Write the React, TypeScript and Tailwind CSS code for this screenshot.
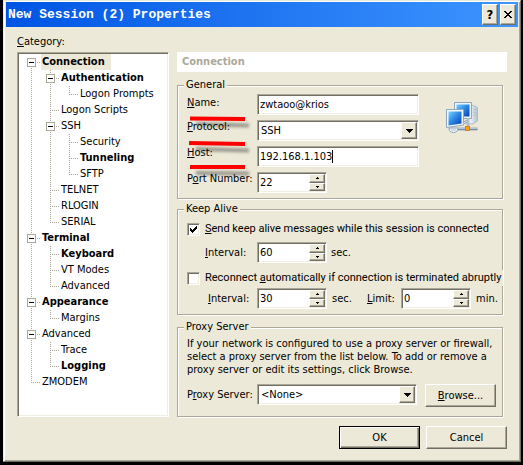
import type { ReactNode } from "react";

const SUNKEN =
  "border border-t-[#aca899] border-l-[#aca899] border-r-white border-b-white bg-white shadow-[inset_1px_1px_0_#716f64,inset_-1px_-1px_0_#f1efe2]";
const RAISED =
  "border border-t-white border-l-white border-r-[#716f64] border-b-[#716f64] bg-[#ece9d8] shadow-[inset_-1px_-1px_0_#aca899]";

type Cell = "line" | "tee" | "elbow" | "box" | "boxFirst";

function Connector({ kind }: { kind: Cell }) {
  const isBox = kind === "box" || kind === "boxFirst";
  return (
    <svg width="19" height="16" viewBox="0 0 19 16" className="shrink-0" shapeRendering="crispEdges" aria-hidden="true">
      <g stroke="#aca899" strokeDasharray="1 1" fill="none">
        {(kind === "line" || kind === "tee" || kind === "box") && <path d="M9.5 0V16" />}
        {kind === "elbow" && <path d="M9.5 0V9" />}
        {kind === "boxFirst" && <path d="M9.5 8V16" />}
        {kind !== "line" && <path d="M9 8.5H18" />}
      </g>
      {isBox && (
        <>
          <rect x="5.5" y="4.5" width="8" height="8" fill="#fff" stroke="#aca899" />
          <path d="M7 8.5H12" stroke="#000" />
        </>
      )}
    </svg>
  );
}

const TREE: { label: string; cells: Cell[]; bold?: boolean; selected?: boolean }[] = [
  { label: "Connection", cells: ["boxFirst"], bold: true, selected: true },
  { label: "Authentication", cells: ["line", "box"], bold: true },
  { label: "Logon Prompts", cells: ["line", "line", "elbow"] },
  { label: "Logon Scripts", cells: ["line", "tee"] },
  { label: "SSH", cells: ["line", "box"] },
  { label: "Security", cells: ["line", "line", "tee"] },
  { label: "Tunneling", cells: ["line", "line", "tee"], bold: true },
  { label: "SFTP", cells: ["line", "line", "elbow"] },
  { label: "TELNET", cells: ["line", "tee"] },
  { label: "RLOGIN", cells: ["line", "tee"] },
  { label: "SERIAL", cells: ["line", "elbow"] },
  { label: "Terminal", cells: ["box"], bold: true },
  { label: "Keyboard", cells: ["line", "tee"], bold: true },
  { label: "VT Modes", cells: ["line", "tee"] },
  { label: "Advanced", cells: ["line", "elbow"] },
  { label: "Appearance", cells: ["box"], bold: true },
  { label: "Margins", cells: ["line", "elbow"] },
  { label: "Advanced", cells: ["box"] },
  { label: "Trace", cells: ["line", "tee"] },
  { label: "Logging", cells: ["line", "elbow"], bold: true },
  { label: "ZMODEM", cells: ["elbow"] },
];

function Group({ title, className, children }: { title: string; className: string; children: ReactNode }) {
  return (
    <fieldset
      className={`relative mr-1 min-w-0 border border-[#aca899] pl-[9px] shadow-[1px_1px_0_#fff,inset_1px_1px_0_#fff] ${className}`}
    >
      <legend className="-ml-[3px] h-[14px] bg-[#ece9d8] px-[2px] leading-[14px]">{title}</legend>
      {children}
    </fieldset>
  );
}

function Combo({ id, value, options, className }: { id: string; value: string; options: string[]; className: string }) {
  return (
    <div className={`relative h-[21px] ${SUNKEN} ${className}`}>
      <select id={id} defaultValue={value} className="block h-full w-full appearance-none bg-transparent pr-5 pl-[3px] outline-none">
        {options.map((o) => (
          <option key={o}>{o}</option>
        ))}
      </select>
      <span className={`pointer-events-none absolute top-px right-px bottom-px flex w-4 items-center justify-center ${RAISED}`}>
        <svg width="7" height="4" viewBox="0 0 7 4" shapeRendering="crispEdges" aria-hidden="true">
          <path d="M0 0H7V1H6V2H5V3H4V4H3V3H2V2H1V1H0Z" />
        </svg>
      </span>
    </div>
  );
}

function Spinner({ id, value }: { id: string; value: string }) {
  return (
    <div className={`flex h-[21px] w-[70px] shrink-0 p-px ${SUNKEN}`}>
      <input id={id} type="text" inputMode="numeric" defaultValue={value} className="min-w-0 flex-1 bg-transparent pl-px outline-none" />
      <div className="flex w-4 flex-col">
        <button type="button" aria-label="Increase" className={`flex flex-1 items-center justify-center ${RAISED}`}>
          <svg width="3" height="2" viewBox="0 0 3 2" shapeRendering="crispEdges">
            <path d="M1 0H2V1H3V2H0V1H1Z" />
          </svg>
        </button>
        <button type="button" aria-label="Decrease" className={`flex flex-1 items-center justify-center ${RAISED}`}>
          <svg width="3" height="2" viewBox="0 0 3 2" shapeRendering="crispEdges">
            <path d="M0 0H3V1H2V2H1V1H0Z" />
          </svg>
        </button>
      </div>
    </div>
  );
}

function Check({ id, checked }: { id: string; checked?: boolean }) {
  return (
    <span className="grid h-[13px] w-[13px] shrink-0">
      <input
        id={id}
        type="checkbox"
        defaultChecked={checked}
        className={`peer col-start-1 row-start-1 h-[13px] w-[13px] appearance-none ${SUNKEN}`}
      />
      <svg
        width="13"
        height="13"
        viewBox="0 0 13 13"
        shapeRendering="crispEdges"
        className="pointer-events-none invisible col-start-1 row-start-1 peer-checked:visible"
        aria-hidden="true"
      >
        <path d="M3 5H4V6H5V7H6V6H7V5H8V4H9V3H10V6H9V7H8V8H7V9H6V10H5V9H4V8H3Z" />
      </svg>
    </span>
  );
}

function NetworkIcon() {
  return (
    <svg width="34" height="34" viewBox="0 0 34 34" className="absolute top-[9px] right-[23px]" aria-hidden="true">
      <defs>
        <linearGradient id="screen" x1="0" y1="0" x2="1" y2="1">
          <stop offset="0" stopColor="#7fd0fb" />
          <stop offset="0.45" stopColor="#2d8ce8" />
          <stop offset="1" stopColor="#0a3fb4" />
        </linearGradient>
        <linearGradient id="tower" x1="0" y1="0" x2="1" y2="0">
          <stop offset="0" stopColor="#ffffff" />
          <stop offset="1" stopColor="#b4c3d2" />
        </linearGradient>
      </defs>
      <path d="M26 4L31 5.500Q32.500 6 32.500 8V20L28 23H23V5Z" fill="url(#tower)" stroke="#a3b4c6" strokeWidth="0.8" />
      <path d="M28 8L31.500 9M28 11L31.500 12M28 14L31.500 14.500" stroke="#a9bacb" strokeWidth="0.8" />
      <path d="M9.500 1.500H26.500V17.500H9.500Z" fill="#eef4f9" stroke="#8fa6bd" />
      <path d="M11.500 3.500H24.500V15.500H11.500Z" fill="url(#screen)" />
      <path d="M4 27Q4 31.500 8.500 31.500T13 27Z" fill="#eef3f7" stroke="#8fa6bd" />
      <path d="M6 29H11" stroke="#b7c5d2" />
      <path d="M1.500 8.500H18.500V24L1.500 26.500Z" fill="#f4f8fb" stroke="#8fa6bd" />
      <path d="M3.500 10.500H16.500V22.500L3.500 24.500Z" fill="url(#screen)" />
      <path d="M18 22.500L22 20M23 17V27" stroke="#8296ab" strokeWidth="2.500" />
      <path d="M18 22.500L22 20M23 17V27" stroke="#dce7f0" />
      <path d="M13 28H32.500" stroke="#71869d" strokeWidth="2.600" />
      <path d="M13 27.600H32.500" stroke="#b9cbdc" strokeWidth="1" />
      <rect x="20.500" y="25.500" width="4" height="4" fill="#ffa010" stroke="#d87400" strokeWidth="0.800" />
    </svg>
  );
}

function RedMarks() {
  return (
    <svg width="70" height="70" viewBox="0 0 70 70" className="pointer-events-none absolute top-[22px] left-[7px]" aria-hidden="true">
      <defs>
        <filter id="soft" x="-20%" y="-100%" width="140%" height="300%">
          <feGaussianBlur stdDeviation="1.5" />
        </filter>
      </defs>
      <g stroke="#000" strokeOpacity="0.35" strokeWidth="4" filter="url(#soft)">
        <path d="M11 10L64 11.500" />
        <path d="M11 35L64 36.500" />
        <path d="M11 59L64 59.500" />
      </g>
      <g stroke="#ff0000" strokeWidth="4">
        <path d="M5 4.500L60 5" />
        <path d="M4 29L60 30" />
        <path d="M5 53L60 53" />
      </g>
    </svg>
  );
}

export default function App() {
  return (
    <div className="min-h-screen bg-black pr-[2px] pb-[2px] pl-[3px] font-['DejaVu_Sans_Condensed','Noto_Sans',sans-serif] text-[11px] leading-[14px] text-black">
      <div className="border border-t-[#ece9d8] border-r-[#716f64] border-b-[#716f64] border-l-[#ece9d8] bg-[#ece9d8] px-[2px] pt-px shadow-[inset_1px_1px_0_#fff,inset_-1px_-1px_0_#aca899]">
        <header className="flex h-[25px] items-center bg-linear-to-r from-[#0054e3] to-[#3d95ff] pr-[2px] pl-[2px]">
          <h1 className="flex-1 font-['Liberation_Mono',monospace] text-[13px] font-bold whitespace-pre text-white">
            New Session (2) Properties
          </h1>
          <button type="button" aria-label="Help" className={`flex h-[21px] w-4 items-center justify-center text-[13px] font-bold ${RAISED}`}>
            ?
          </button>
          <button type="button" aria-label="Close" className={`ml-[2px] flex h-[21px] w-4 items-center justify-center ${RAISED}`}>
            <svg width="8" height="7" viewBox="0 0 8 7" shapeRendering="crispEdges" aria-hidden="true">
              <path d="M0 0H2V1H3V2H5V1H6V0H8V1H7V2H6V3H5V4H6V5H7V6H8V7H6V6H5V5H3V6H2V7H0V6H1V5H2V4H3V3H2V2H1V1H0Z" />
            </svg>
          </button>
        </header>

        <main className="px-[11px] pt-2 pb-3">
          <p id="category" className="mb-[3px]">
            <u>C</u>ategory:
          </p>
          <div className="flex gap-2">
            <ul aria-labelledby="category" className={`w-[152px] shrink-0 pt-px pl-[4px] ${SUNKEN}`}>
              {TREE.map((row, i) => (
                <li key={i} className="flex h-4">
                  {row.cells.map((c, j) => (
                    <Connector key={j} kind={c} />
                  ))}
                  <span
                    className={`pl-px leading-4 whitespace-nowrap ${row.bold ? "font-bold" : ""} ${row.selected ? "bg-[#ece9d8] pr-[6px]" : ""}`}
                  >
                    {row.label}
                  </span>
                </li>
              ))}
            </ul>

            <div className="min-w-0 flex-1">
              <h2 className="h-5 bg-white pl-[5px] leading-5 font-bold text-[#aca899]">Connection</h2>

              <Group title="General" className="mt-[6px] pt-[2px] pb-[5px]">
                <div className="grid grid-cols-[70px_162px] gap-y-[5px]">
                  <label htmlFor="name" className="pt-[2px]"><u>N</u>ame:</label>
                  <input id="name" type="text" defaultValue="zwtaoo@krios" className={`h-[21px] w-full pl-[2px] outline-none ${SUNKEN}`} />
                  <label htmlFor="protocol"><u>P</u>rotocol:</label>
                  <Combo id="protocol" value="SSH" options={["SSH", "TELNET", "RLOGIN", "SERIAL"]} className="w-full" />
                  <label htmlFor="host"><u>H</u>ost:</label>
                  <div className={`flex h-[21px] items-center pl-[2px] ${SUNKEN}`}>
                    <input id="host" type="text" defaultValue="192.168.1.103" className="[field-sizing:content] outline-none" />
                    <span className="h-[13px] w-px bg-black" />
                  </div>
                  <label htmlFor="port" className="whitespace-nowrap">P<u>o</u>rt Number:</label>
                  <Spinner id="port" value="22" />
                </div>
                <NetworkIcon />
                <RedMarks />
              </Group>

              <Group title="Keep Alive" className="mt-[3px] pt-[6px] pb-[5px]">
                <div className="flex h-[14px] items-center gap-[5px] whitespace-nowrap">
                  <Check id="keep" checked />
                  <label htmlFor="keep" className="font-['Roboto',sans-serif]"><u>S</u>end keep alive messages while this session is connected</label>
                </div>
                <div className="mt-[6px] flex items-center pl-[18px]">
                  <label htmlFor="keepInterval" className="w-[52px]"><u>I</u>nterval:</label>
                  <Spinner id="keepInterval" value="60" />
                  <span className="pl-1">sec.</span>
                </div>
                <div className="mt-[7px] -mr-px flex h-4 items-center gap-[5px] bg-[#ece9d8] whitespace-nowrap">
                  <Check id="reconnect" />
                  <label htmlFor="reconnect" className="font-['Roboto',sans-serif]">Reconnect <u>a</u>utomatically if connection is terminated abruptly</label>
                </div>
                <div className="mt-[2px] flex items-center pl-[21px]">
                  <label htmlFor="reInterval" className="w-[49px]"><u>I</u>nterval:</label>
                  <Spinner id="reInterval" value="30" />
                  <span className="w-10 pl-[5px]">sec.</span>
                  <label htmlFor="limit" className="w-[34px]"><u>L</u>imit:</label>
                  <Spinner id="limit" value="0" />
                  <span className="pl-[5px]">min.</span>
                </div>
              </Group>

              <Group title="Proxy Server" className="mt-[5px] pt-[3px] pb-[9px]">
                <p className="leading-[13px] whitespace-nowrap">
                  If your network is configured to use a proxy server or firewall,
                  <br />
                  select a proxy server from the list below. To add or remove a
                  <br />
                  proxy server or edit its settings, click Browse.
                </p>
                <div className="mt-2 flex pr-[6px]">
                  <label htmlFor="proxy" className="w-[70px] pt-1 whitespace-nowrap">P<u>r</u>oxy Server:</label>
                  <Combo id="proxy" value="<None>" options={["<None>"]} className="min-w-0 flex-1" />
                  <button type="button" className={`ml-2 h-[23px] w-[71px] ${RAISED}`}><u>B</u>rowse...</button>
                </div>
              </Group>
            </div>
          </div>

          <div className="mt-[9px] flex justify-end gap-[6px]">
            <button type="submit" className="h-[23px] w-[81px] border border-black bg-[#ece9d8] shadow-[inset_1px_1px_0_#fff,inset_-1px_-1px_0_#716f64,inset_-2px_-2px_0_#aca899]">
              OK
            </button>
            <button type="button" className={`h-[23px] w-[81px] ${RAISED}`}>Cancel</button>
          </div>
        </main>
      </div>
    </div>
  );
}
